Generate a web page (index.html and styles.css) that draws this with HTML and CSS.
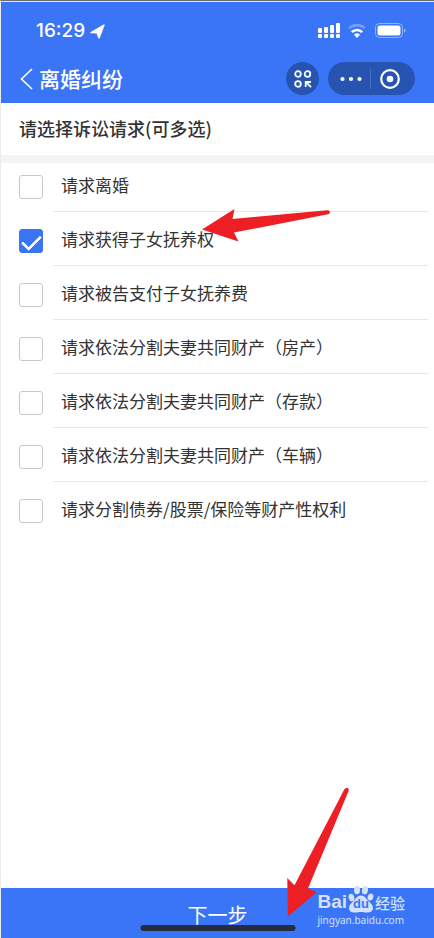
FILE: index.html
```html
<!DOCTYPE html>
<html lang="zh-CN">
<head>
<meta charset="utf-8">
<meta name="viewport" content="width=device-width, initial-scale=1">
<title>离婚纠纷</title>
<link rel="stylesheet" href="styles.css">
</head>
<body>
<div class="page">
  <header class="header">
    <div class="status">
      <span class="time">16:29</span>
      <svg class="locate" width="15" height="15" viewBox="0 0 15 15" aria-hidden="true"><path d="M14 1 9 14 7 8.800 1 8.600Z" fill="#fff" stroke="#fff" stroke-width="1.400" stroke-linejoin="round"/></svg>
      <svg class="signal" width="22" height="16" viewBox="0 0 22 16" fill="#fff" aria-hidden="true">
        <rect x="0" y="5" width="4" height="5" rx="1"/><rect x="6" y="4" width="4" height="6" rx="1"/><rect x="12" y="2" width="4" height="8" rx="1"/><rect x="18" y="0" width="4" height="10" rx="1"/>
        <rect x="0" y="11" width="4" height="4" rx="1"/><rect x="6" y="11" width="4" height="4" rx="1"/><rect x="12" y="11" width="4" height="4" rx="1"/><rect x="18" y="11" width="4" height="4" rx="1"/>
      </svg>
      <svg class="wifi" width="18" height="14" viewBox="0 0 18 14" fill="none" aria-hidden="true">
        <path d="M1 4.200a12 12 0 0 1 16 0" stroke="#fff" stroke-opacity=".3" stroke-width="2.6"/>
        <path d="M3.8 8.2a7.4 7.4 0 0 1 10.4 0" stroke="#fff" stroke-width="2.6"/>
        <path d="M6 10.8a4.3 4.3 0 0 1 6 0L9 14Z" fill="#fff"/>
      </svg>
      <svg class="battery" width="31" height="16" viewBox="0 0 31 16" aria-hidden="true">
        <rect x=".5" y=".5" width="27" height="14" rx="4" fill="none" stroke="#fff" stroke-opacity=".45"/>
        <rect x="2.5" y="2.5" width="23" height="10" rx="2.5" fill="#fff"/>
        <path d="M29 5.5q1.6.6 1.6 2t-1.6 2Z" fill="#fff" fill-opacity=".5"/>
      </svg>
    </div>
    <div class="nav">
      <button class="back" type="button" aria-label="返回"><svg width="13" height="22" viewBox="0 0 13 22" fill="none" stroke="#fff" stroke-width="1.6"><path d="M12 1 1.5 11 12 21"/></svg></button>
      <h1 class="title">离婚纠纷</h1>
      <button class="round" type="button" aria-label="小程序"><svg width="18" height="18" viewBox="0 0 18 18" fill="none" stroke="#fff" stroke-width="1.8"><circle cx="4" cy="4" r="2.8"/><circle cx="13.5" cy="4" r="2.8"/><circle cx="4" cy="14" r="2.8"/><path d="M11.7 17v-5H17M12 12.2l5 5"/></svg></button>
      <div class="capsule">
        <button class="cap" type="button" aria-label="更多"><svg width="22" height="6" viewBox="0 0 22 6" fill="#fff"><circle cx="2.5" cy="3" r="2.1"/><circle cx="11" cy="3" r="2.1"/><circle cx="19.5" cy="3" r="2.1"/></svg></button>
        <button class="cap cap-close" type="button" aria-label="关闭"><svg width="20" height="20" viewBox="0 0 20 20"><circle cx="10" cy="10" r="8.8" fill="none" stroke="#fff" stroke-width="2.2"/><circle cx="10" cy="10" r="3.3" fill="#fff"/></svg></button>
      </div>
    </div>
  </header>
  <main class="main">
    <h2 class="prompt">请选择诉讼请求(可多选)</h2>
    <div class="list">
      <label class="row"><input class="check" type="checkbox"><span class="text">请求离婚</span></label>
      <label class="row"><input class="check" type="checkbox" checked><span class="text">请求获得子女抚养权</span></label>
      <label class="row"><input class="check" type="checkbox"><span class="text">请求被告支付子女抚养费</span></label>
      <label class="row"><input class="check" type="checkbox"><span class="text">请求依法分割夫妻共同财产（房产）</span></label>
      <label class="row"><input class="check" type="checkbox"><span class="text">请求依法分割夫妻共同财产（存款）</span></label>
      <label class="row"><input class="check" type="checkbox"><span class="text">请求依法分割夫妻共同财产（车辆）</span></label>
      <label class="row"><input class="check" type="checkbox"><span class="text">请求分割债券/股票/保险等财产性权利</span></label>
    </div>
    <svg class="arrow arrow-row" width="130" height="34" viewBox="0 0 130 34" aria-hidden="true"><path d="M1 20.5 33.5 0 31.5 10 126 1.2Q129 1 129 3T127 5.3L33 23.5 37.5 32.5Z" fill="#ed1f24"/></svg>
  </main>
  <footer class="footer">
    <button class="next" type="button">下一步</button>
    <div class="home"></div>
    <svg class="arrow arrow-next" width="62" height="131" viewBox="0 0 62 131" aria-hidden="true"><path d="M.8 129.500.3 91 7.5 98.2 57.4 2.2Q59 0 60.7.9T61.6 4L21 101.5 30 105Z" fill="#ed1f24"/></svg>
    <div class="mark">
      <div class="brand">
        <span class="bai">Bai</span>
        <span class="paw"><svg width="26" height="28" viewBox="0 0 26 28" fill="#d5e1fd" aria-hidden="true"><ellipse cx="3.5" cy="12.5" rx="2.8" ry="3.8" transform="rotate(-15 3.5 12.5)"/><ellipse cx="9" cy="5" rx="3" ry="4.2"/><ellipse cx="17" cy="5.2" rx="3" ry="4.2" transform="rotate(10 17 5.2)"/><ellipse cx="22.5" cy="12" rx="2.8" ry="3.6" transform="rotate(15 22.5 12)"/><path d="M13 10.500c-4 0-5 3.200-7.500 5.500C2.800 18.500 1 20.200 1 23c0 3 2.500 4.600 6 4.600 2.500 0 4-.6 6-.6s3.500.6 6 .6c3.500 0 6-1.600 6-4.600 0-2.800-1.800-4.500-4.500-7-2.500-2.300-3.500-5.500-7.500-5.500Z"/></svg><span class="du">du</span></span>
        <span class="jingyan">经验</span>
      </div>
      <div class="site">jingyan.baidu.com</div>
    </div>
  </footer>
</div>
</body>
</html>
```
FILE: styles.css
```css
* { box-sizing: border-box; }

body {
  margin: 0;
  background: #fff;
  color: #333;
  font-family: "Noto Sans CJK SC", sans-serif;
}

button {
  display: flex;
  align-items: center;
  justify-content: center;
  padding: 0;
  border: 0;
  background: none;
  color: #fff;
  font-family: inherit;
}

svg { display: block; flex: none; }

.page {
  display: flex;
  flex-direction: column;
  min-height: 100vh;
  border-top: 1px solid #6d6d70;
  border-left: 1px solid #ececec;
}

.header {
  padding: 18px 19px 8px 18px;
  border-top: 1px solid #dce6fb;
  background: #3975f6;
  color: #fff;
}

.status {
  display: flex;
  align-items: center;
  height: 22px;
  padding: 0 9px 0 17px;
}

.time { font: 500 19px/22px Inter, sans-serif; }
.locate { margin-left: 5px; }
.signal { margin-left: auto; }
.wifi { margin-left: 8px; }
.battery { margin-left: 9px; }

.nav {
  display: flex;
  align-items: center;
  height: 33px;
  margin-top: 20px;
}

.back { width: 14px; height: 32px; }

.title {
  flex: 1;
  margin: 0 0 0 6px;
  padding-bottom: 2px;
  font-size: 21px;
  font-weight: 500;
  line-height: 30px;
}

.round {
  width: 33px;
  height: 33px;
  border-radius: 50%;
  background: #2854b1;
}

.capsule {
  display: flex;
  align-items: center;
  width: 87px;
  height: 33px;
  margin-left: 9px;
  border-radius: 17px;
  background: #2854b1;
}

.cap { flex: 1; height: 20px; padding-left: 4px; }
.cap-close { padding: 0 6px 0 0; border-left: 1px solid #4a70c4; }

.main { position: relative; flex: 1; }

.prompt {
  margin: 0;
  padding: 13px 18px 15px;
  border-bottom: 8px solid #f4f4f4;
  font-size: 18px;
  font-weight: 500;
  line-height: 24px;
}

.row {
  display: grid;
  grid-template-columns: 24px 1fr;
  column-gap: 10px;
  padding: 0 6px 0 18px;
}

.check {
  appearance: none;
  width: 24px;
  height: 24px;
  margin: 17px 0 0;
  border: 1px solid #c8c8c8;
  border-radius: 3px;
  background: #fff;
}

.check:checked {
  display: grid;
  justify-items: center;
  padding-top: 5px;
  border-color: #3975f6;
  background: #3975f6;
}

.check:checked::before {
  content: "";
  width: 16px;
  height: 8px;
  border: solid #fff;
  border-width: 0 0 3px 3px;
  border-radius: 1px;
  transform: rotate(-45deg);
}

.text {
  padding: 15px 0 14px 8px;
  border-bottom: 1px solid #e8e8e8;
  font-size: 17px;
  line-height: 24px;
}

.row:first-child .check { margin-top: 12px; }
.row:first-child .text { padding-top: 10px; }
.row:last-child .text { border-bottom: 0; }

.arrow { position: absolute; overflow: visible; pointer-events: none; }
.arrow-row { top: 106px; left: 200px; }
.arrow-next { top: -101px; left: 286px; }

.footer { position: relative; }

.next {
  width: 100%;
  height: 50px;
  padding-top: 3px;
  background: #3975f6;
  font-size: 20px;
  line-height: 28px;
}

.home {
  position: absolute;
  bottom: 7px;
  left: 50%;
  width: 155px;
  height: 6px;
  border-radius: 3px;
  background: #252d40;
  transform: translateX(-50%);
}

.mark {
  position: absolute;
  right: 29px;
  bottom: 11px;
  color: #d5e1fd;
  pointer-events: none;
}

.brand { display: flex; align-items: flex-end; height: 28px; }
.bai { font: 700 19px/22px "Liberation Sans", sans-serif; }
.paw { position: relative; margin-left: 1px; }

.du {
  position: absolute;
  bottom: 2px;
  left: 0;
  width: 100%;
  color: #3975f6;
  font: 700 13px/14px "Liberation Sans", sans-serif;
  text-align: center;
}

.jingyan { margin-left: 1px; font-size: 15px; font-weight: 500; line-height: 20px; }
.site { font: 10px/14px "Noto Sans", sans-serif; }
```
